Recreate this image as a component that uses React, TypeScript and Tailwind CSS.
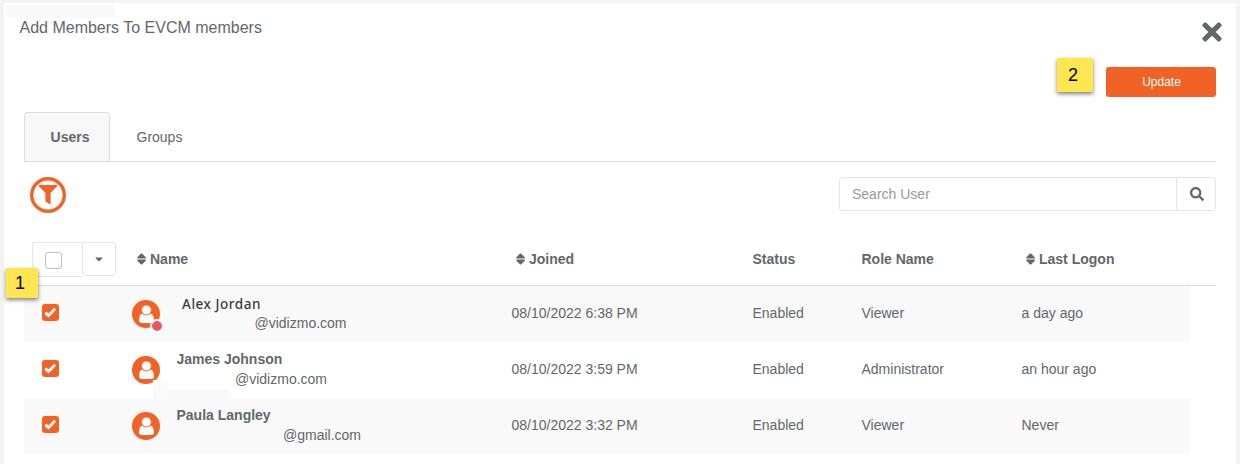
import React from "react";
import { FaSearch, FaTimes, FaCaretDown } from "react-icons/fa";
import clsx from "clsx";

interface Member {
  name: string;
  nameClass: string;
  email: string;
  emailClass: string;
  joined: string;
  status: string;
  role: string;
  lastLogon: string;
  busy?: boolean;
}

const members: Member[] = [
  {
    name: "Alex Jordan",
    nameClass: "ml-[50px] h-[20px] pt-px text-[13.5px] leading-[20px] font-medium tracking-[0.55px] text-[#3a3c3f] font-['Noto_Sans',sans-serif]",
    email: "@vidizmo.com",
    emailClass: "ml-[122.5px]",
    joined: "08/10/2022 6:38 PM",
    status: "Enabled",
    role: "Viewer",
    lastLogon: "a day ago",
    busy: true,
  },
  {
    name: "James Johnson",
    nameClass: "ml-[44.5px] font-bold",
    email: "@vidizmo.com",
    emailClass: "ml-[103px]",
    joined: "08/10/2022 3:59 PM",
    status: "Enabled",
    role: "Administrator",
    lastLogon: "an hour ago",
  },
  {
    name: "Paula Langley",
    nameClass: "ml-[44.5px] font-bold",
    email: "@gmail.com",
    emailClass: "ml-[151px]",
    joined: "08/10/2022 3:32 PM",
    status: "Enabled",
    role: "Viewer",
    lastLogon: "Never",
  },
];

const columns = "grid grid-cols-[108px_379.5px_241px_109px_160px_1fr]";

function SortIcon() {
  return (
    <svg viewBox="0 0 9 12" className="mr-[4px] h-3 w-[9px]" fill="currentColor">
      <path d="M4 0.5H5L8.8 4.2V5.4H0.4V4.2Z" />
      <path d="M4 11.5H5L8.8 7.8V6.6H0.4V7.8Z" />
    </svg>
  );
}

function Avatar({ busy }: { busy?: boolean }) {
  return (
    <div className="absolute left-0 top-[14px] h-7 w-7">
      <svg viewBox="0 0 28 28" className="h-7 w-7">
        <circle cx="14" cy="14" r="14" fill="#f26227" />
        <path
          d="M9.8 13.4C7.7 14.6 7 17 7 20.2C7 22.2 8 22.9 10 22.9H18.8C20.9 22.9 22 22.2 22 20.2C22 17 21.1 14.6 19 13.4C17.8 15 11.2 15 9.8 13.4Z"
          fill="#fff"
        />
        <circle cx="14.4" cy="10" r="5" fill="#fff" stroke="#f26227" strokeWidth="0.9" />
      </svg>
      {busy && (
        <span className="absolute left-[18px] top-[19px] h-[14px] w-[14px] rounded-full border-2 border-white bg-[#ee5566]" />
      )}
    </div>
  );
}

function Note({ children, className }: { children: React.ReactNode; className: string }) {
  return (
    <div
      className={clsx(
        "absolute flex items-center justify-center bg-[#ffe54f] text-[18px] leading-none text-black shadow-[0_2px_4px_rgba(0,0,0,0.5)]",
        className
      )}
    >
      {children}
    </div>
  );
}

export default function App() {
  return (
    <div className="h-[464px] overflow-hidden bg-[#f3f3f3] px-1 pt-[3px] font-['Liberation_Sans',Arial,sans-serif] text-[14px] text-[#63676a]">
      <div className="relative h-full rounded-t-[2px] bg-white px-5">
        <div className="absolute left-px top-[2px] h-[13px] w-[110px] bg-[#f9f9f9]" />

        {/* Title bar */}
        <div className="relative flex h-[64px] justify-between">
          <h1 className="-ml-[4.5px] mt-[13px] text-[16px] leading-6">Add Members To EVCM members</h1>
          <button aria-label="Close" className="mr-[-8px] mt-[14.5px] h-7 w-[24px]">
            <FaTimes className="h-[28px] w-[24px]" />
          </button>
        </div>

        <div className="flex justify-end">
          <button className="h-[30px] w-[110px] rounded-[3px] bg-[#f26227] pl-px text-[12px] text-white">Update</button>
        </div>

        {/* Tabs */}
        <div className="mt-[15px] flex h-[50px] border-b border-[#dcdcdc]">
          <div className="flex w-[86px] items-center justify-center rounded-t-[4px] border border-b-0 border-[#dcdcdc] bg-[#f8f8f8] pl-[6px] font-bold">
            Users
          </div>
          <div className="flex items-center pl-[26.5px] pt-[2px]">Groups</div>
        </div>

        {/* Filter and search */}
        <div className="mt-[15px] flex justify-between">
          <button aria-label="Filter" className="ml-[6px] h-9 w-9">
            <svg viewBox="0 0 36 36" className="h-9 w-9" fill="#f26227">
              <circle cx="18" cy="18" r="16.3" fill="none" stroke="#f26227" strokeWidth="3.4" />
              <path d="M9.2 8H26.8Q27.9 8.4 27.2 9.3L20.6 15.8V26.6Q20.4 27.6 19.4 27.1L15.9 24.8Q15.4 24.4 15.4 23.7V15.8L8.8 9.3Q8.1 8.4 9.2 8Z" />
            </svg>
          </button>
          <div className="flex h-[34px] w-[377px] rounded-[3px] border border-[#e3e6e8]">
            <span className="flex flex-1 items-center border-r border-[#e3e6e8] pl-[12px] text-[#999]">Search User</span>
            <span className="flex w-[38px] items-center justify-center pl-px">
              <FaSearch className="h-[14px] w-[14px]" />
            </span>
          </div>
        </div>

        {/* Column headings */}
        <div className={clsx(columns, "mt-[29px] h-[44px] border-b border-[#dcdcdc] font-bold leading-[34px]")}>
          <div className="ml-2 flex">
            <div className="h-[35px] w-[50px] border border-r-0 border-[#e3e6e8] pl-[12px] pt-[9px]">
              <div className="h-[17px] w-[17px] rounded-[3px] border border-[#bfbfbf]" />
            </div>
            <div className="flex h-[34px] w-[34px] items-center justify-center rounded-[3px] border border-[#e3e6e8]">
              <FaCaretDown className="h-3 w-3" />
            </div>
          </div>
          <div className="flex items-center pb-[9px] pl-[5px]">
            <SortIcon />
            Name
          </div>
          <div className="flex items-center pb-[9px] pl-[4.5px]">
            <SortIcon />
            Joined
          </div>
          <div>Status</div>
          <div>Role Name</div>
          <div className="flex items-center pb-[9px] pl-[4.5px]">
            <SortIcon />
            Last Logon
          </div>
        </div>

        {/* Members */}
        <div className="w-[1166px]">
          {members.map((m) => (
            <div key={m.name} className={clsx(columns, "h-14 leading-[54px] odd:bg-[#f9f9f9]")}>
              <div className="pl-[18px] pt-[18px]">
                <div className="flex h-[17px] w-[17px] items-center justify-center rounded-[3px] bg-[#f26227]">
                  <svg viewBox="0 0 17 17" className="h-[17px] w-[17px]">
                    <path d="M3.3 8.6L6.6 11.5L13 4.8" fill="none" stroke="#fff" strokeWidth="2.8" />
                  </svg>
                </div>
              </div>
              <div className="relative pt-[7px] leading-[20px]">
                <Avatar busy={m.busy} />
                <p className={m.nameClass}>{m.name}</p>
                <p className={m.emailClass}>{m.email}</p>
              </div>
              <div>{m.joined}</div>
              <div>{m.status}</div>
              <div>{m.role}</div>
              <div>{m.lastLogon}</div>
            </div>
          ))}
        </div>

        {/* Masked account text */}
        <div className="absolute left-[149px] top-[377px] h-[18px] w-[15px] bg-[#fafafa]" />
        <div className="absolute left-[164px] top-[386px] h-[9px] w-[61px] bg-[#f9f9f9]" />

        {/* Step markers */}
        <Note className="left-[1053px] top-[55px] h-[34px] w-[36px] pr-[4px]">2</Note>
        <Note className="left-[2px] top-[265px] h-[30px] w-[32px] pr-[4px]">1</Note>
      </div>
    </div>
  );
}
